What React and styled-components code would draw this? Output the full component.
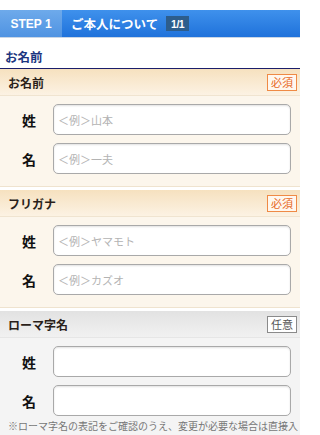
import React from 'react';
import styled, { createGlobalStyle, css } from 'styled-components';

const GlobalStyle = createGlobalStyle`
  html, body {
    margin: 0;
    padding: 0;
    background: #ffffff;
  }
  body {
    font-family: "Noto Sans CJK JP", "Noto Sans", sans-serif;
    color: #222;
    width: 300px;
    overflow: hidden;
  }
`;

const Page = styled.div`
  padding-top: 10px;
  width: 300px;
  overflow: hidden;
`;

const StepBar = styled.div`
  display: flex;
  align-items: stretch;
  height: 27px;
  background: linear-gradient(#3f91ec, #1f72db);
  border-bottom: 1px solid #c9d6e6;
`;

const StepCell = styled.div`
  width: 62px;
  display: flex;
  align-items: center;
  justify-content: center;
  background: linear-gradient(#6eaaeb, #4f93e2);
  color: #fff;
  font-family: "Liberation Sans", Arial, sans-serif;
  font-weight: bold;
  font-size: 12px;
`;

const StepTitle = styled.div`
  display: flex;
  align-items: center;
  gap: 8px;
  padding-left: 9px;
  color: #fff;
  font-weight: bold;
  font-size: 12.5px;
`;

const PageBadge = styled.span`
  display: inline-flex;
  align-items: center;
  justify-content: center;
  width: 23px;
  height: 15px;
  background: #2d5d8c;
  color: #fff;
  font-family: "Liberation Sans", Arial, sans-serif;
  font-weight: bold;
  font-size: 10.5px;
  letter-spacing: -0.5px;
`;

const SectionTitle = styled.h2`
  margin: 0;
  height: 31px;
  box-sizing: border-box;
  padding: 11px 0 0 5px;
  font-size: 12.5px;
  font-weight: 600;
  line-height: 16px;
  color: #1c3580;
  border-bottom: 1.5px solid #1b1e6a;
`;

const Group = styled.section`
  margin-bottom: 3px;
  border-bottom: 1px solid ${p => (p.$tone === 'gray' ? '#e2e2e2' : '#efe3cf')};
  &:last-child {
    margin-bottom: 0;
    border-bottom: none;
  }
`;

const GroupHeader = styled.div`
  display: flex;
  align-items: center;
  justify-content: space-between;
  height: 26px;
  padding: 0 3px 0 8px;
  border-bottom: 1px solid ${p => (p.$tone === 'gray' ? '#e6e6e6' : '#f0e4d0')};
  ${p => p.$tone === 'gray'
    ? css`background: linear-gradient(#e2e2e2, #f1f1f1);`
    : css`background: linear-gradient(#f6e1bf, #fcf2e3);`}
`;

const GroupName = styled.span`
  font-size: 12px;
  font-weight: bold;
  color: #2a1f1a;
`;

const Tag = styled.span`
  display: inline-flex;
  align-items: center;
  justify-content: center;
  width: 28px;
  height: 15px;
  font-size: 11px;
  line-height: 1;
  ${p => p.$kind === 'required'
    ? css`
        border: 1px solid #ef8a45;
        color: #e6681e;
        background: #fff7ee;
      `
    : css`
        border: 1px solid #8a8a8a;
        color: #555;
        background: #fff;
      `}
`;

const GroupBody = styled.div`
  display: flex;
  flex-direction: column;
  gap: 8px;
  padding: 8px 9px ${p => (p.$hasNote ? '3px' : '12px')} 0;
  background: ${p => (p.$tone === 'gray' ? '#f4f4f4' : '#fcf6ec')};
`;

const Row = styled.div`
  display: flex;
  align-items: center;
`;

const Label = styled.label`
  width: 53px;
  text-align: center;
  padding-left: 5px;
  box-sizing: border-box;
  font-size: 14px;
  font-weight: bold;
  color: #111;
`;

const Field = styled.input`
  flex: 1;
  min-width: 0;
  height: 31px;
  box-sizing: border-box;
  border: 1px solid #a9a9a9;
  border-radius: 5px;
  background: #fff;
  box-shadow: inset 0 1px 2px rgba(0, 0, 0, 0.12);
  padding: 0 4px;
  font-family: inherit;
  font-size: 11px;
  color: #333;
  outline: none;
  &::placeholder {
    color: #b3b3b3;
  }
`;

const Note = styled.p`
  margin: 0;
  padding: 0 0 4px 8px;
  font-size: 10px;
  line-height: 14px;
  color: #777;
  background: #f4f4f4;
`;

const groups = [
  {
    name: 'お名前',
    tone: 'beige',
    tag: 'required',
    fields: [
      { label: '姓', placeholder: '＜例＞山本' },
      { label: '名', placeholder: '＜例＞一夫' },
    ],
  },
  {
    name: 'フリガナ',
    tone: 'beige',
    tag: 'required',
    fields: [
      { label: '姓', placeholder: '＜例＞ヤマモト' },
      { label: '名', placeholder: '＜例＞カズオ' },
    ],
  },
  {
    name: 'ローマ字名',
    tone: 'gray',
    tag: 'optional',
    fields: [
      { label: '姓', placeholder: '' },
      { label: '名', placeholder: '' },
    ],
    note: '※ローマ字名の表記をご確認のうえ、変更が必要な場合は直接入力してください。',
  },
];

function App() {
  return (
    <Page>
      <GlobalStyle />
      <StepBar>
        <StepCell>STEP 1</StepCell>
        <StepTitle>
          ご本人について
          <PageBadge>1/1</PageBadge>
        </StepTitle>
      </StepBar>

      <SectionTitle>お名前</SectionTitle>

      {groups.map(g => (
        <Group key={g.name} $tone={g.tone}>
          <GroupHeader $tone={g.tone}>
            <GroupName>{g.name}</GroupName>
            <Tag $kind={g.tag}>{g.tag === 'required' ? '必須' : '任意'}</Tag>
          </GroupHeader>
          <GroupBody $tone={g.tone} $hasNote={!!g.note}>
            {g.fields.map(f => (
              <Row key={f.label}>
                <Label>{f.label}</Label>
                <Field placeholder={f.placeholder} />
              </Row>
            ))}
          </GroupBody>
          {g.note && <Note>{g.note}</Note>}
        </Group>
      ))}
    </Page>
  );
}

export default App;
